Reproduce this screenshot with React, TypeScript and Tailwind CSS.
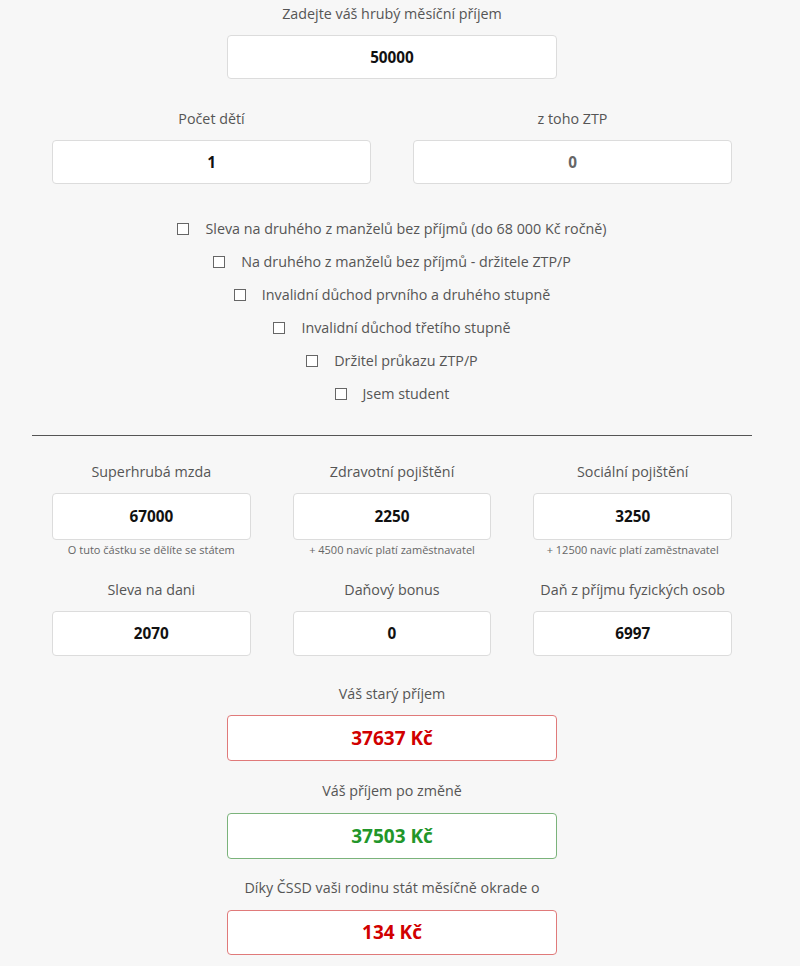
import React from "react";

const font = { fontFamily: "'Open Sans', 'Liberation Sans', sans-serif" };

function Label({ text }: { text: string }) {
  return (
    <div className="text-center text-[14.3px] leading-5 h-5 text-[#555]">{text}</div>
  );
}

function Box({ value, className }: { value: string; className?: string }) {
  return (
    <div
      className={
        "mt-[11px] flex items-center justify-center bg-white rounded border border-[#dcdcdc] text-[15.3px] font-bold text-[#111] " +
        (className || "h-11")
      }
    >
      {value}
    </div>
  );
}

const checks = [
  "Sleva na druhého z manželů bez příjmů (do 68 000 Kč ročně)",
  "Na druhého z manželů bez příjmů - držitele ZTP/P",
  "Invalidní důchod prvního a druhého stupně",
  "Invalidní důchod třetího stupně",
  "Držitel průkazu ZTP/P",
  "Jsem student",
];

export default function App() {
  return (
    <div className="min-h-screen w-full bg-[#f7f7f7]" style={font}>
      <div className="ml-8 w-[720px] pt-1 pb-3">
        {/* Hrubý příjem */}
        <Label text="Zadejte váš hrubý měsíční příjem" />
        <div className="w-[330px] mx-auto">
          <Box value="50000" />
        </div>

        {/* Děti */}
        <div className="mt-[30px] px-5 grid grid-cols-2 gap-x-[42px]">
          <div>
            <Label text="Počet dětí" />
            <Box value="1" />
          </div>
          <div>
            <Label text="z toho ZTP" />
            <Box value="0" className="h-11 !text-[#666]" />
          </div>
        </div>

        {/* Checkboxy */}
        <div className="mt-7 flex flex-col items-center">
          {checks.map((c) => (
            <label key={c} className="h-[33px] flex items-center text-[14.3px] text-[#555]">
              <span className="w-3 h-3 border border-[#666] bg-white mr-4 shrink-0"></span>
              {c}
            </label>
          ))}
        </div>

        <hr className="mt-[25px] border-0 border-t border-[#555]" />

        {/* Výsledky */}
        <div className="mt-[26px] px-5 grid grid-cols-3 gap-x-[42px]">
          <div>
            <Label text="Superhrubá mzda" />
            <Box value="67000" className="h-[47px]" />
            <div className="mt-[3px] text-center text-[11px] leading-[14px] text-[#666]">
              O tuto částku se dělíte se státem
            </div>
          </div>
          <div>
            <Label text="Zdravotní pojištění" />
            <Box value="2250" className="h-[47px]" />
            <div className="mt-[3px] text-center text-[11px] leading-[14px] text-[#666]">
              + 4500 navíc platí zaměstnavatel
            </div>
          </div>
          <div>
            <Label text="Sociální pojištění" />
            <Box value="3250" className="h-[47px]" />
            <div className="mt-[3px] text-center text-[11px] leading-[14px] text-[#666]">
              + 12500 navíc platí zaměstnavatel
            </div>
          </div>
        </div>

        <div className="mt-[23px] px-5 grid grid-cols-3 gap-x-[42px]">
          <div>
            <Label text="Sleva na dani" />
            <Box value="2070" className="h-[45px]" />
          </div>
          <div>
            <Label text="Daňový bonus" />
            <Box value="0" className="h-[45px]" />
          </div>
          <div>
            <Label text="Daň z příjmu fyzických osob" />
            <Box value="6997" className="h-[45px]" />
          </div>
        </div>

        <div className="mt-7 w-[330px] mx-auto">
          <Label text="Váš starý příjem" />
          <div className="mt-[11px] h-[46px] flex items-center justify-center bg-white rounded border border-[#e07a7a] text-[19px] font-bold text-[#d10000]">
            37637 Kč
          </div>
        </div>

        <div className="mt-5 w-[330px] mx-auto">
          <Label text="Váš příjem po změně" />
          <div className="mt-3 h-[46px] flex items-center justify-center bg-white rounded border border-[#7bb37b] text-[19px] font-bold text-[#22962a]">
            37503 Kč
          </div>
        </div>

        <div className="mt-[19px] w-[330px] mx-auto">
          <Label text="Díky ČSSD vaši rodinu stát měsíčně okrade o" />
          <div className="mt-3 h-[45px] flex items-center justify-center bg-white rounded border border-[#e07a7a] text-[19px] font-bold text-[#d10000]">
            134 Kč
          </div>
        </div>
      </div>
    </div>
  );
}
